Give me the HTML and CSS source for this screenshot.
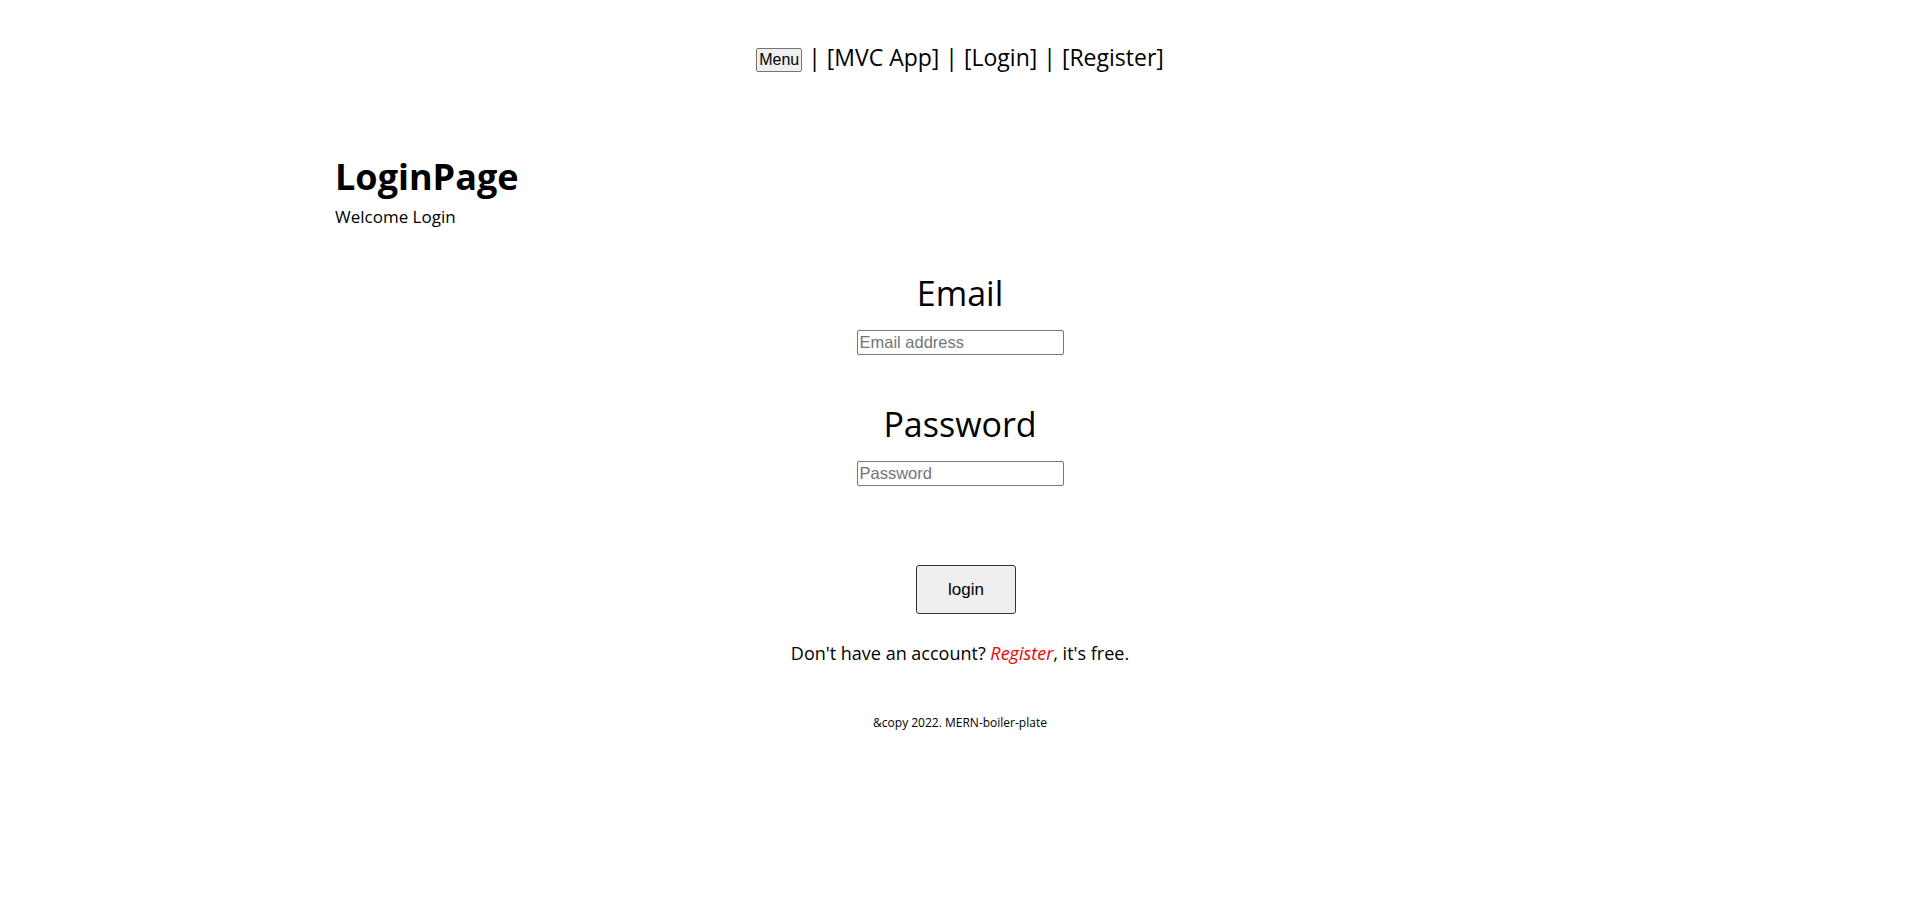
FILE: index.html
```html
<!DOCTYPE html>
<html lang="en">
<head>
<meta charset="utf-8">
<title>LoginPage</title>
<link rel="stylesheet" href="styles.css">
</head>
<body>
<header class="nav">
  <button class="menu-btn" type="button">Menu</button> | <a class="nav-link" href="#">[MVC App]</a> | <a class="nav-link" href="#">[Login]</a> | <a class="nav-link" href="#">[Register]</a>
</header>
<main class="container">
  <h1 class="title">LoginPage</h1>
  <p class="subtitle">Welcome Login</p>
  <form class="login-form">
    <label class="field-label" for="email">Email</label>
    <input class="field-input" id="email" type="email" placeholder="Email address">
    <label class="field-label" for="password">Password</label>
    <input class="field-input" id="password" type="password" placeholder="Password">
    <button class="login-btn" type="button">login</button>
  </form>
  <p class="signup">Don't have an account? <a class="signup-link" href="#">Register</a>, it's free.</p>
</main>
<footer class="footer">&amp;copy 2022. MERN-boiler-plate</footer>
</body>
</html>
```
FILE: styles.css
```css
html, body {
  margin: 0;
  padding: 0;
  background: #fff;
  color: #000;
  font-family: "Open Sans", "Noto Sans", sans-serif;
}

.nav {
  text-align: center;
  font-size: 23px;
  line-height: 28px;
  padding-top: 43px;
  height: 61px;
}

.nav-link {
  color: #000;
  text-decoration: none;
}

.menu-btn {
  font-family: "Liberation Sans", Arial, sans-serif;
  font-size: 16px;
  line-height: 18px;
  padding: 2px 1px;
  height: 24px;
  width: 46px;
  background: #efefef;
  border: 1px solid #767676;
  border-radius: 2px;
  color: #000;
  vertical-align: 1px;
}

.container {
  width: 1250px;
  margin: 0 auto;
  padding-top: 51px;
}

.title {
  font-size: 36px;
  font-weight: 700;
  margin: 0;
  line-height: 44px;
}

.subtitle {
  font-size: 17px;
  margin: 7px 0 0;
  line-height: 22px;
}

.login-form {
  display: flex;
  flex-direction: column;
  align-items: center;
  padding-top: 42px;
}

.field-label {
  font-size: 34px;
  line-height: 46px;
}

.field-input {
  box-sizing: border-box;
  width: 207px;
  height: 25px;
  margin: 14px 0 46px;
  padding: 1px 2px;
  font-family: "Liberation Sans", Arial, sans-serif;
  font-size: 16.5px;
  border: 1px solid #767676;
  border-radius: 2px;
}

.field-input::placeholder {
  color: #757575;
}

.login-btn {
  margin: 33px 0 0 12px;
  width: 100px;
  height: 49px;
  font-family: "Liberation Sans", Arial, sans-serif;
  font-size: 17px;
  background: #efefef;
  border: 1px solid #333;
  border-radius: 3px;
  color: #000;
}

.signup {
  text-align: center;
  font-size: 18px;
  margin: 27px 0 0;
  line-height: 24px;
}

.signup-link {
  color: #e00;
  font-style: italic;
  text-decoration: none;
}

.footer {
  text-align: center;
  font-size: 12px;
  margin-top: 49px;
}
```
